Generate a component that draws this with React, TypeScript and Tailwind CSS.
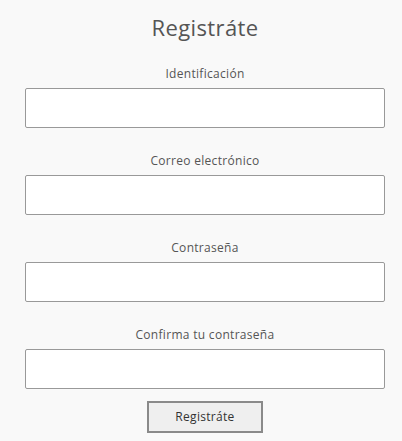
const fields = [
  { id: 'identificacion', label: 'Identificación', type: 'text' },
  { id: 'correo', label: 'Correo electrónico', type: 'email' },
  { id: 'password', label: 'Contraseña', type: 'password' },
  { id: 'confirm', label: 'Confirma tu contraseña', type: 'password' },
];

export default function App() {
  return (
    <div className="min-h-screen bg-[#f9f9f9] text-[#555] font-['Open_Sans',sans-serif]">
      <form className="ml-[25px] flex w-[360px] flex-col items-center pt-[12px]">
        <h1 className="text-[22px] leading-[30px] tracking-[0.4px] text-[#555]">Registráte</h1>
        <div className="mt-[24px] flex w-full flex-col gap-[25px]">
          {fields.map((f) => (
            <div key={f.id} className="flex flex-col items-center gap-[6px]">
              <label htmlFor={f.id} className="text-[12px] leading-[16px] tracking-[0.3px] text-[#555]">
                {f.label}
              </label>
              <input
                id={f.id}
                type={f.type}
                className="h-[40px] w-full rounded-[2px] border border-[#999] bg-white"
              />
            </div>
          ))}
        </div>
        <button
          type="button"
          className="mt-[12px] h-[32px] w-[116px] border-2 border-[#8a8a8a] bg-[#efefef] text-[12px] tracking-[0.3px] text-[#333]"
        >
          Registráte
        </button>
      </form>
    </div>
  );
}
